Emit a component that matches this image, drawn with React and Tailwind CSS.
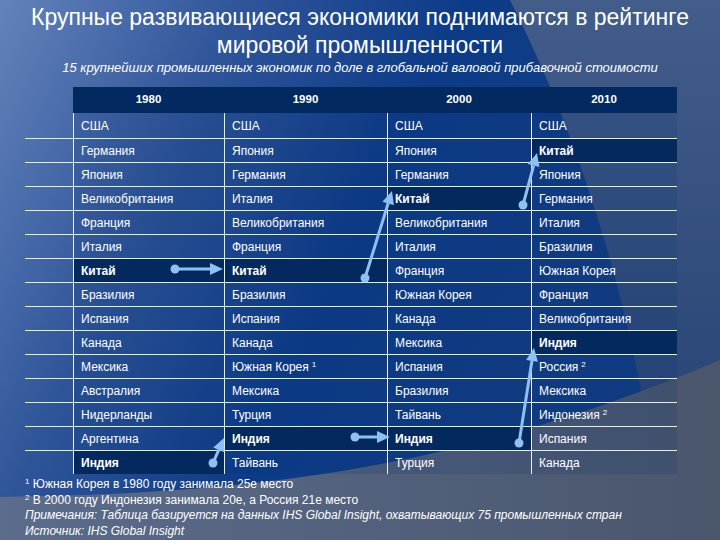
import React from "react";

const years = ["1980", "1990", "2000", "2010"];

// * = выделенная ячейка
const rows = [
  ["США", "США", "США", "США"],
  ["Германия", "Япония", "Япония", "*Китай"],
  ["Япония", "Германия", "Германия", "Япония"],
  ["Великобритания", "Италия", "*Китай", "Германия"],
  ["Франция", "Великобритания", "Великобритания", "Италия"],
  ["Италия", "Франция", "Италия", "Бразилия"],
  ["*Китай", "*Китай", "Франция", "Южная Корея"],
  ["Бразилия", "Бразилия", "Южная Корея", "Франция"],
  ["Испания", "Испания", "Канада", "Великобритания"],
  ["Канада", "Канада", "Мексика", "*Индия"],
  ["Мексика", "Южная Корея^1", "Испания", "Россия^2"],
  ["Австралия", "Мексика", "Бразилия", "Мексика"],
  ["Нидерланды", "Турция", "Тайвань", "Индонезия^2"],
  ["Аргентина", "*Индия", "*Индия", "Испания"],
  ["*Индия", "Тайвань", "Турция", "Канада"],
];

const colWidths = ["w-[151px]", "w-[163px]", "w-[144px]", "w-[146px]"];

// стрелки: [x1, y1, x2, y2] — от точки к острию
const arrows = [
  [175, 269, 223, 269],
  [365, 278, 392, 191],
  [523, 205, 537, 153],
  [213, 463, 224, 438],
  [355, 437, 390, 437],
  [519, 443, 534, 348],
];

function Background() {
  return (
    <svg className="absolute inset-0" width="720" height="540" viewBox="0 0 720 540">
      <defs>
        <linearGradient id="base" x1="0" y1="0" x2="1" y2="0.35">
          <stop offset="0" stopColor="#6483bc" />
          <stop offset="0.3" stopColor="#2f5599" />
          <stop offset="0.58" stopColor="#0c3b88" />
          <stop offset="0.85" stopColor="#123e84" />
        </linearGradient>
        <linearGradient id="right" x1="0" y1="0" x2="0" y2="1">
          <stop offset="0" stopColor="#425d8a" />
          <stop offset="1" stopColor="#2a4676" />
        </linearGradient>
        <linearGradient id="bottom" x1="0" y1="0" x2="1" y2="0">
          <stop offset="0" stopColor="#5b6c8c" />
          <stop offset="1" stopColor="#4a566c" />
        </linearGradient>
      </defs>
      <rect width="720" height="540" fill="url(#base)" />
      <path d="M510 0 C570 120 615 250 645 410 L720 362 L720 0 Z" fill="url(#right)" />
      <path d="M0 497 C250 494 460 470 720 360 L720 540 L0 540 Z" fill="url(#bottom)" />
    </svg>
  );
}

function Arrows() {
  return (
    <svg className="absolute inset-0 pointer-events-none" width="720" height="540" viewBox="0 0 720 540">
      {arrows.map(([x1, y1, x2, y2], i) => {
        const dx = x2 - x1;
        const dy = y2 - y1;
        const len = Math.hypot(dx, dy);
        const ux = dx / len;
        const uy = dy / len;
        const bx = x2 - ux * 13;
        const by = y2 - uy * 13;
        const px = -uy * 6;
        const py = ux * 6;
        return (
          <g key={i} fill="#8fc0f2" stroke="#8fc0f2">
            <circle cx={x1} cy={y1} r="4.5" stroke="none" />
            <line x1={x1} y1={y1} x2={bx} y2={by} strokeWidth="3" />
            <polygon
              points={`${x2},${y2} ${bx + px},${by + py} ${bx - px},${by - py}`}
              stroke="none"
            />
          </g>
        );
      })}
    </svg>
  );
}

function CellText({ value }) {
  const [name, note] = value.replace("*", "").split("^");
  return (
    <>
      {name}
      {note && <sup className="ml-[3px] text-[8px]">{note}</sup>}
    </>
  );
}

export default function App() {
  return (
    <div className="relative w-[720px] h-[540px] overflow-hidden text-white font-['Liberation_Sans',Arial,sans-serif]">
      <Background />

      <div className="relative">
        <h1 className="pt-[3px] text-center text-[23px] leading-[28px]">
          Крупные развивающиеся экономики поднимаются в рейтинге
          <br />
          мировой промышленности
        </h1>
        <p className="mt-[1px] text-center text-[13px] italic leading-[16px]">
          15 крупнейших промышленных экономик по доле в глобальной валовой прибавочной стоимости
        </p>

        <div className="mt-[11px] text-[12px]">
          <div className="flex h-[26px]">
            <div className="w-[73px]" />
            {years.map((y, i) => (
              <div
                key={y}
                className={`${colWidths[i]} bg-[#022a61] flex items-center justify-center font-bold text-[11.5px]`}
              >
                {y}
              </div>
            ))}
          </div>

          {rows.map((row, r) => (
            <div
              key={r}
              className={`flex ${r === 0 ? "h-[25px]" : "h-[24px]"}`}
            >
              <div
                className={`w-[48px] ml-[25px] ${r === 0 ? "" : "border-t border-[#e6eef8]"}`}
              />
              {row.map((cell, c) => {
                const hi = cell.startsWith("*");
                return (
                  <div
                    key={c}
                    className={`${colWidths[c]} border-l border-[#e6eef8] ${
                      r === 0 ? "" : "border-t"
                    } ${hi ? "bg-[#03295e] font-bold" : "bg-[#0a2f70]/15"} flex items-center pl-[7px]`}
                  >
                    <span>
                      <CellText value={cell} />
                    </span>
                  </div>
                );
              })}
            </div>
          ))}
        </div>

        <div className="mt-[3px] pl-[25px] text-[12px] leading-[15.5px]">
          <p>
            <sup className="text-[8px]">1</sup> Южная Корея в 1980 году занимала 25е место
          </p>
          <p>
            <sup className="text-[8px]">2</sup> В 2000 году Индонезия занимала 20е, а Россия 21е место
          </p>
          <p className="italic">
            Примечания: Таблица базируется на данных IHS Global Insight, охватывающих 75 промышленных стран
          </p>
          <p className="italic">Источник: IHS Global Insight</p>
        </div>
      </div>

      <Arrows />
    </div>
  );
}
